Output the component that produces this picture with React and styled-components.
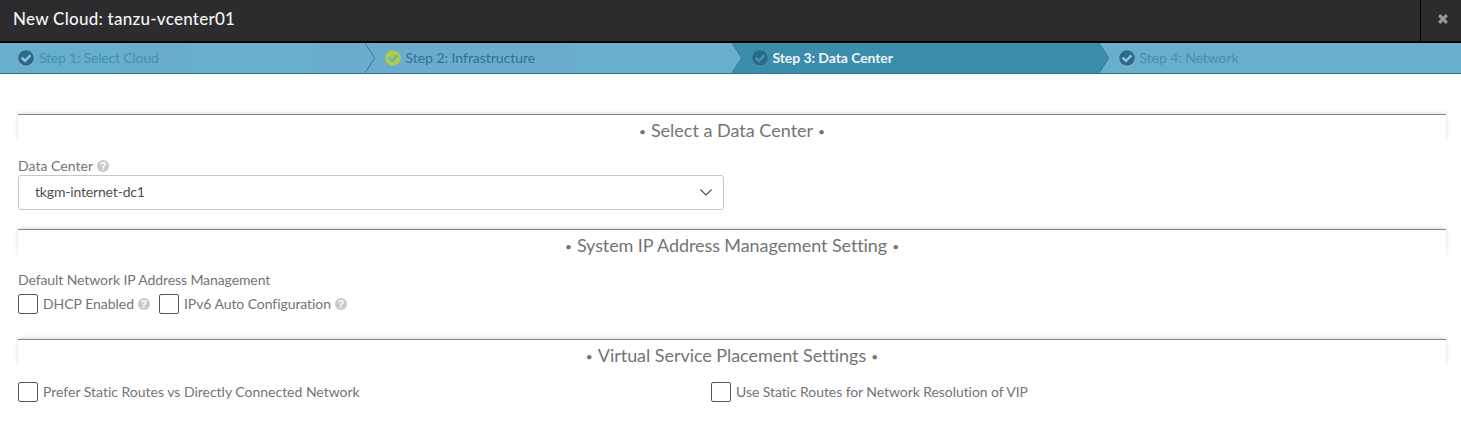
import React from "react";
import styled, { createGlobalStyle } from "styled-components";

const GlobalStyle = createGlobalStyle`
  * { box-sizing: border-box; }
  body {
    margin: 0;
    background: #fff;
    font-family: Lato, "Open Sans", sans-serif;
    font-size: 14px;
    font-variant-ligatures: none;
    color: #747474;
  }
`;

const Page = styled.div`
  display: flex;
  flex-direction: column;
  height: 421px;
  overflow: hidden;
`;

const TitleBar = styled.header`
  display: flex;
  height: 43px;
  background: #2c2c2e;
  border-bottom: 2px solid #000;
`;

const Title = styled.h1`
  flex: 1;
  margin: 0;
  padding-left: 13px;
  font-size: 17px;
  font-weight: 500;
  line-height: 38px;
  color: #f4f4f4;
`;

const CloseButton = styled.button`
  display: flex;
  align-items: center;
  justify-content: center;
  width: 41px;
  padding: 0 0 3px 4px;
  border: 0;
  border-left: 1px solid #000;
  background: transparent;
`;

const Text = styled.span`
  white-space: nowrap;
  letter-spacing: ${(p) => p.$track || 0}px;
`;

const Steps = styled.nav`
  display: flex;
  height: 31px;
  border-bottom: 1px solid #2f7390;
  background: #67afcb;
`;

const Step = styled.div`
  display: flex;
  align-items: center;
  flex: ${(p) => (p.$grow ? "1" : `0 0 ${p.$width}px`)};
  padding-left: ${(p) => (p.$first ? 18 : 0)}px;
  background: ${(p) => p.$bg};
  color: ${(p) => p.$color};
  font-weight: ${(p) => (p.$active ? 700 : 400)};
  line-height: 30px;
`;

const Divider = styled.svg`
  flex: none;
  width: 11px;
  height: 30px;
  margin-right: 8.5px;
`;

const StepIcon = styled.svg`
  flex: none;
  width: 16px;
  height: 17px;
  margin: 0 5px 0 0;
`;

const Content = styled.main`
  padding: 40px 15px 0 18px;
`;

const Section = styled.section`
  height: ${(p) => p.$height}px;
`;

const SectionHeading = styled.h2`
  display: flex;
  justify-content: center;
  gap: 6px;
  height: 28px;
  margin: 0 0 ${(p) => p.$gap}px;
  border-top: 1px solid #858585;
  box-shadow: 0 -1px 4px rgba(0, 0, 0, 0.14);
  clip-path: inset(-6px -6px 0 -6px);
  font-size: 18px;
  font-weight: 400;
  line-height: 31px;
`;

const Bullet = styled.span`
  display: flex;
  justify-content: center;
  width: 5px;
  font-size: 12px;
  line-height: 33px;
`;

const FieldLabel = styled.div`
  display: flex;
  align-items: center;
  height: 17px;
  margin-bottom: ${(p) => p.$gap}px;
  gap: 4px;
`;

const Select = styled.div`
  display: flex;
  align-items: center;
  justify-content: space-between;
  width: 706px;
  height: 35px;
  padding: 0 11px 1px 16px;
  border: 1px solid #c6c6c6;
  border-radius: 3px;
  color: #4f4f4f;
`;

const SelectValue = styled(Text)`
  padding-bottom: 1px;
`;

const CheckRow = styled.div`
  display: flex;
  align-items: center;
  height: 20px;
`;

const CheckItem = styled.label`
  display: flex;
  align-items: center;
  flex: 0 0 ${(p) => p.$width}px;
  height: 20px;
  line-height: 18px;
`;

const CheckLabel = styled(Text)`
  height: 19px;
`;

const CheckBox = styled.span`
  flex: none;
  width: 20px;
  height: 20px;
  margin-right: 5px;
  border: 1px solid #555;
  border-radius: 2px;
`;

const HelpBadge = styled.span`
  display: flex;
  flex: none;
  align-items: center;
  justify-content: center;
  width: 12px;
  height: 12px;
  margin-left: ${(p) => p.$space || 0}px;
  border-radius: 50%;
  background: #c9c9c9;
  color: #fff;
  font: 700 11px/12px "Liberation Sans", sans-serif;
`;

const STEPS = [
  {
    label: "Step 1: Select Cloud",
    track: -0.2,
    width: 365,
    bg: "linear-gradient(90deg, #67afcb 124px, #69adcd 124px, #69adcd 188px, #67afcb 188px, #67afcb 316px, #6aabce 316px)",
    color: "#4093b4",
    disc: "#2b6a88",
    tick: "#8fc5dc",
    shade: "#82bdd5",
  },
  {
    label: "Step 2: Infrastructure",
    track: -0.03,
    width: 367,
    before: "#6aabce",
    bg: "linear-gradient(90deg, #6aabce 207px, #67afcb 207px)",
    color: "#2f7390",
    disc: "#afcd48",
    tick: "#67afcb",
  },
  {
    label: "Step 3: Data Center",
    track: -0.08,
    width: 367,
    before: "#67afcb",
    bg: "#3c8cab",
    color: "#eef6fa",
    disc: "#2b6a86",
    tick: "#4893b3",
    shade: "#4d99b7",
    active: true,
  },
  {
    label: "Step 4: Network",
    track: -0.08,
    before: "#3c8cab",
    bg: "#67afcb",
    color: "#4093b4",
    disc: "#2b6a88",
    tick: "#8fc5dc",
    shade: "#82bdd5",
  },
];

function StepItem({ step, first }) {
  return (
    <Step
      $first={first}
      $grow={!step.width}
      $width={step.width}
      $bg={step.bg}
      $color={step.color}
      $active={step.active}
    >
      {!first && (
        <Divider viewBox="0 0 11 30">
          <path d="M0 0 L10 15 L0 30 Z" fill={step.before} />
          <path d="M0 0 L9.7 15 L0 30" fill="none" stroke="#34799a" />
        </Divider>
      )}
      <StepIcon viewBox="0 0 16 17">
        {step.shade && <circle cx="8" cy="9" r="7.8" fill={step.shade} />}
        <circle cx="8" cy="8" r="7.8" fill={step.disc} />
        <path d="M3.6 7.6 L7 10.8 L12.4 5.4" fill="none" stroke={step.tick} strokeWidth="2.5" />
      </StepIcon>
      <Text $track={step.track}>{step.label}</Text>
    </Step>
  );
}

function Heading({ gap, track, children }) {
  return (
    <SectionHeading $gap={gap}>
      <Bullet>•</Bullet>
      <Text $track={track}>{children}</Text>
      <Bullet>•</Bullet>
    </SectionHeading>
  );
}

function Check({ width, track, help, children }) {
  return (
    <CheckItem $width={width}>
      <CheckBox />
      <CheckLabel $track={track}>{children}</CheckLabel>
      {help && <HelpBadge $space={4}>?</HelpBadge>}
    </CheckItem>
  );
}

export default function App() {
  return (
    <Page>
      <GlobalStyle />
      <TitleBar>
        <Title>
          <Text $track={0.26}>New Cloud: tanzu-vcenter01</Text>
        </Title>
        <CloseButton aria-label="Close">
          <svg width="10" height="10" viewBox="0 0 10 10">
            <path d="M1.2 1.2 L8.8 8.8 M8.8 1.2 L1.2 8.8" stroke="#999" strokeWidth="3.1" />
          </svg>
        </CloseButton>
      </TitleBar>
      <Steps>
        {STEPS.map((step, i) => (
          <StepItem key={step.label} step={step} first={i === 0} />
        ))}
      </Steps>
      <Content>
        <Section $height={115}>
          <Heading gap={15}>Select a Data Center</Heading>
          <FieldLabel $gap={1}>
            <Text $track={0.04}>Data Center</Text>
            <HelpBadge>?</HelpBadge>
          </FieldLabel>
          <Select>
            <SelectValue $track={-0.17}>tkgm-internet-dc1</SelectValue>
            <svg width="12" height="7" viewBox="0 0 12 7">
              <path d="M0.4 0.5 L6 6 L11.6 0.5" fill="none" stroke="#2d5873" strokeWidth="1.1" />
            </svg>
          </Select>
        </Section>
        <Section $height={110}>
          <Heading gap={14} track={-0.08}>System IP Address Management Setting</Heading>
          <FieldLabel $gap={6}>
            <Text $track={-0.09}>Default Network IP Address Management</Text>
          </FieldLabel>
          <CheckRow>
            <Check width={141} track={-0.03} help>DHCP Enabled</Check>
            <Check width={200} track={-0.07} help>IPv6 Auto Configuration</Check>
          </CheckRow>
        </Section>
        <Section $height={80}>
          <Heading gap={15} track={-0.05}>Virtual Service Placement Settings</Heading>
          <CheckRow>
            <Check width={693} track={-0.01}>Prefer Static Routes vs Directly Connected Network</Check>
            <Check width={400} track={-0.07}>Use Static Routes for Network Resolution of VIP</Check>
          </CheckRow>
        </Section>
      </Content>
    </Page>
  );
}
